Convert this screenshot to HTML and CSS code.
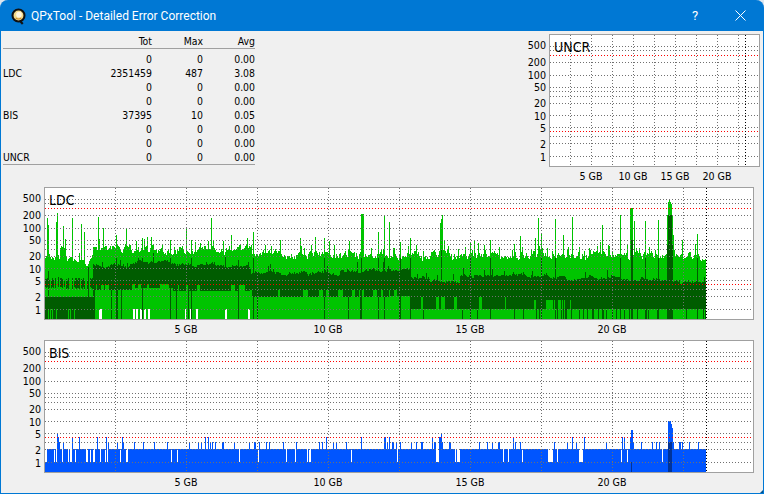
FILE: index.html
```html
<!DOCTYPE html>
<html lang="en">
<head>
<meta charset="utf-8">
<title>QPxTool - Detailed Error Correction</title>
<link rel="stylesheet" href="styles.css">
</head>
<body>
<div class="window">
  <header class="titlebar">
    <svg class="app-icon" viewBox="0 0 16 18" width="15" height="17" aria-hidden="true">
      <circle cx="8" cy="8" r="6.4" fill="#f3d98a" stroke="#111" stroke-width="2.2"/>
      <circle cx="8.5" cy="7" r="3" fill="#fff6df"/>
      <path d="M5 10.5c2 1.6 4 1.6 6 0" fill="none" stroke="#c98a2b" stroke-width="1.2"/>
      <path d="M9.5 13.5l3 3.5" stroke="#111" stroke-width="2.2" fill="none"/>
    </svg>
    <span class="title">QPxTool - Detailed Error Correction</span>
    <span class="help">?</span>
    <svg class="close" viewBox="0 0 11 11" width="11" height="11" aria-hidden="true">
      <path d="M.5.5l10 10M10.5.5l-10 10" stroke="#fff" stroke-width="1" fill="none"/>
    </svg>
  </header>
  <main class="content">
    <section class="top-row">
      <table class="stats">
        <thead>
          <tr><th class="name"></th><th>Tot</th><th>Max</th><th>Avg</th></tr>
        </thead>
        <tbody>
          <tr><td class="name"></td><td>0</td><td>0</td><td>0.00</td></tr>
          <tr><td class="name">LDC</td><td>2351459</td><td>487</td><td>3.08</td></tr>
          <tr><td class="name"></td><td>0</td><td>0</td><td>0.00</td></tr>
          <tr><td class="name"></td><td>0</td><td>0</td><td>0.00</td></tr>
          <tr><td class="name">BIS</td><td>37395</td><td>10</td><td>0.05</td></tr>
          <tr><td class="name"></td><td>0</td><td>0</td><td>0.00</td></tr>
          <tr><td class="name"></td><td>0</td><td>0</td><td>0.00</td></tr>
          <tr><td class="name">UNCR</td><td>0</td><td>0</td><td>0.00</td></tr>
        </tbody>
      </table>
      <svg id="uncr" class="chart chart-small" viewBox="522 34 238 148"></svg>
    </section>
    <svg id="ldc" class="chart chart-wide" viewBox="9 187 752 148"></svg>
    <svg id="bis" class="chart chart-wide" viewBox="9 340 752 148"></svg>
  </main>
  <div class="grip"></div>
</div>
<script src="script.js"></script>
</body>
</html>
```
FILE: styles.css
```css
* { box-sizing: border-box; }
html, body { margin: 0; padding: 0; }
body { width: 764px; height: 494px; overflow: hidden; background: #dde6ef; }
.window {
  position: relative;
  width: 764px;
  height: 494px;
  display: flex;
  flex-direction: column;
  background: #0078d4;
  border: 1px solid #0078d4;
  border-top: 0;
  border-radius: 8px 8px 0 0;
  overflow: hidden;
}
.titlebar {
  flex: none;
  height: 31px;
  display: flex;
  align-items: center;
  padding-left: 10px;
  color: #fff;
  font: 12px Roboto, "Open Sans", sans-serif;
}
.app-icon { flex: none; margin-top: 1px; }
.title { margin-left: 5px; flex: 1; }
.help { width: 12px; text-align: center; font-size: 13px; margin-right: 34px; }
.close { flex: none; margin-right: 17px; }
.content {
  flex: 1;
  background: #f0f0f0;
  display: flex;
  flex-direction: column;
  gap: 5px;
  padding-top: 3px;
  font-family: "DejaVu Sans Condensed", "DejaVu Sans", sans-serif;
}
.top-row {
  display: flex;
  justify-content: space-between;
  align-items: flex-start;
  padding: 0 3px 0 2px;
}
.stats {
  width: 252px;
  border-collapse: collapse;
  table-layout: fixed;
  font-size: 10.4px;
  color: #000;
  border-bottom: 1px solid #a0a0a0;
}
.stats th, .stats td {
  padding: 0;
  height: 14px;
  line-height: 14px;
  font-weight: normal;
  text-align: right;
  white-space: nowrap;
}
.stats .name { text-align: left; width: 40px; }
.stats th:nth-child(2) { width: 109px; }
.stats th:nth-child(3) { width: 51px; }
.stats thead th { border-bottom: 1px solid #a0a0a0; height: 14px; padding-bottom: 0; }
.stats tbody tr:first-child td { height: 17px; padding-top: 3px; }
.chart { display: block; flex: none; height: 148px; }
.chart-small { width: 238px; }
.chart-wide { width: 752px; margin-left: 8px; }
.plot { fill: #fff; stroke: #a0a0a0; stroke-width: 1; shape-rendering: crispEdges; }
.bars { fill: none; stroke-width: 1; shape-rendering: crispEdges; }
.bars-light { stroke: #00c400; }
.bars-dark { stroke: #005c00; }
.bars-blue { stroke: #0055ff; }
.bars-navy { stroke: #003399; }
.grid { fill: none; stroke-width: 1; shape-rendering: crispEdges; stroke: #707070; }
.grid-red { stroke: #ff0000; }
.grid-end { stroke: #000; }
.axis-label { font-size: 10.6px; fill: #000; font-family: "DejaVu Sans Condensed", "DejaVu Sans", sans-serif; }
.axis-y { text-anchor: end; }
.axis-x { text-anchor: middle; }
.chart-name { font-size: 14px; fill: #000; font-family: "DejaVu Sans Condensed", "DejaVu Sans", sans-serif; }
.grip {
  position: absolute;
  right: -1px;
  bottom: -1px;
  width: 0;
  height: 0;
  border-style: solid;
  border-width: 0 0 5px 5px;
  border-color: transparent transparent #00508e transparent;
}
```
FILE: script.js
```js
(function () {
  var NS = "http://www.w3.org/2000/svg";
  var LEVELS = { 500: 12, 400: 16, 300: 21, 200: 28, 100: 41, 50: 53, 40: 57, 30: 62, 20: 69, 10: 81, 5: 93, 4: 97, 3: 102, 2: 109, 1: 122 };
  var LABELS = [[500, 11], [200, 27.5], [100, 40.5], [50, 53], [20, 68.5], [10, 81.5], [5, 94], [2, 109.5], [1, 123]];

  function rng(seed) {
    return function () {
      seed |= 0; seed = seed + 0x6D2B79F5 | 0;
      var t = Math.imul(seed ^ seed >>> 15, 1 | seed);
      t = t + Math.imul(t ^ t >>> 7, 61 | t) ^ t;
      return ((t ^ t >>> 14) >>> 0) / 4294967296;
    };
  }
  function el(parent, name, attrs, text) {
    var n = document.createElementNS(NS, name);
    for (var k in attrs) n.setAttribute(k, attrs[k]);
    if (text !== undefined) n.textContent = text;
    parent.appendChild(n);
    return n;
  }
  function bar(x, y1, y2) { return "M" + (x + 0.5) + " " + y1 + "V" + y2; }
  function dotsH(x1, x2, y, period, len) {
    var d = "";
    for (var x = x1; x < x2; x += period) d += "M" + x + " " + (y + 0.5) + "h" + len;
    return d;
  }
  function dotsV(x, y1, y2, period, len) {
    var d = "";
    for (var y = y1; y < y2; y += period) d += "M" + (x + 0.5) + " " + y + "v" + len;
    return d;
  }

  function frame(svg, c) {
    el(svg, "rect", { class: "plot", x: c.x0 + 0.5, y: c.top + 0.5, width: c.x1 - c.x0, height: 132 });
  }
  function overlay(svg, c) {
    var gray = "", red = "", top = c.top, bottom = top + 132;
    Object.keys(LEVELS).forEach(function (v) {
      var y = top + LEVELS[v];
      if (v === "300" || v === "4") red += dotsH(c.x0 + 1, c.x1, y, 3, 1);
      else gray += dotsH(c.x0 + 1, c.x1, y, 3, 1);
    });
    for (var i = 0; i < c.vCount; i++) {
      gray += dotsV(c.vStart + i * c.vStep, top + 1, bottom, 3, 1);
    }
    el(svg, "path", { class: "grid", d: gray });
    el(svg, "path", { class: "grid grid-red", d: red });
    el(svg, "path", { class: "grid grid-end", d: dotsV(c.end, top + 1, bottom, 3, 1) });
    LABELS.forEach(function (l) {
      el(svg, "text", { class: "axis-label axis-y", x: c.x0 - 3, y: top + l[1] + 4 }, l[0]);
    });
    c.xLabels.forEach(function (l) {
      el(svg, "text", { class: "axis-label axis-x", x: l[0], y: bottom + 14 }, l[1]);
    });
    el(svg, "text", { class: "chart-name", x: c.x0 + 5, y: top + 18 }, c.name);
  }

  function drawLdc(svg) {
    var r = rng(71);
    var spikes = { 47: 218, 48: 225, 57: 213, 56: 222, 63: 226, 72: 218, 81: 224, 84: 232, 98: 217, 103: 228, 116: 235, 126: 229,
      142: 238, 170: 240, 186: 228, 191: 240, 211: 218, 231: 235, 253: 232, 265: 245, 315: 237, 324: 238, 361: 214, 362: 214, 363: 214, 378: 232, 384: 216, 389: 222,
      400: 242, 410: 238, 470: 243, 474: 240, 538: 218, 535: 238, 541: 233, 555: 219, 563: 235, 572: 217, 602: 225, 620: 215, 634: 221, 645: 221, 658: 220, 682: 240, 697: 234, 520: 236, 490: 240, 300: 238, 280: 240 };
    var light = "", dark = "", walk = 0, botRun = 0, bot = 297, topWalk = 0;
    var gaps = [99, 100, 101, 133, 134, 136, 137, 140, 141, 144, 145, 148, 149, 185, 190, 191, 196, 197, 225, 226, 248, 249];
    for (var x = 45; x <= 705; x++) {
      walk = walk * 0.6 + (r() - 0.5) * 7;
      topWalk = topWalk * 0.8 + (r() - 0.5) * 2.4;
      var base = x < 60 ? 256 : x < 66 ? 247 : x < 93 ? 260 : x < 130 ? 249 : x < 250 ? 250 : x < 700 ? 255 : 258;
      var t = Math.round(base + walk + (r() < 0.14 ? -12 * r() : 0));
      if (x >= 440 && x <= 441) t = 223 - (x - 440) * 4;
      if (x === 442) t = 215;
      if (x >= 630 && x <= 632) t = 208;
      if (x >= 668 && x <= 671) t = 200 + Math.abs(x - 669) * 2;
      if (x === 667 || x === 672) t = 215;
      if (x === 673) t = 235;
      if (spikes[x]) t = spikes[x];
      var floor = gaps.indexOf(x) >= 0 ? 309 : 319;
      light += bar(x, t, floor);

      if (x < 93) {
        if (r() < 0.7) dark += bar(x, 281 - Math.round(r() * 4), 287 + Math.round(r() * 2));
        if (r() < 0.05) dark += bar(x, 266 + Math.round(r() * 12), 297);
        dark += bar(x, 297, r() < 0.2 ? 309 : 319);
      } else {
        var dt, b1, b2;
        if (x < 130) { dt = 264; b1 = 285; b2 = 290; }
        else if (x < 170) { dt = 261; b1 = 284; b2 = 288; }
        else if (x < 250) { dt = 265; b1 = 285; b2 = 291; }
        else if (x < 340) { dt = 272; b1 = 290; b2 = 297; }
        else if (x < 390) { dt = 270; b1 = 290; b2 = 297; }
        else if (x < 410) { dt = 268; b1 = 290; b2 = 296; }
        else if (x < 430) { dt = 277; b1 = 297; b2 = 309; }
        else if (x < 460) { dt = 281; b1 = 297; b2 = 309; }
        else if (x < 530) { dt = 274; b1 = 297; b2 = 309; }
        else if (x < 575) { dt = 277; b1 = 300; b2 = 309; }
        else if (x < 620) { dt = 277; b1 = 309; b2 = 309; }
        else if (x < 680) { dt = 279; b1 = 309; b2 = 309; }
        else { dt = 281; b1 = 309; b2 = 309; }
        if (botRun <= 0) { bot = r() < 0.65 ? b2 : b1; botRun = 1 + Math.floor(r() * (bot === b2 ? 6 : 3)); }
        botRun--;
        var top = dt + Math.round(topWalk + r() * 2);
        if (r() < 0.05) top -= Math.round(3 + r() * 6);
        var end = bot;
        if (r() < (x > 530 ? 0.14 : 0.03)) end = 319;
        if (x === 631 || x === 632) { top = 240; end = 319; }
        if (x >= 668 && x <= 671) { top = 215; end = 319; }
        if (x === 667 || x === 672) { top = 245; end = 319; }
        if (x === 441) { top = 250; }
        if (spikes[x] && r() < 0.3) { top = Math.min(top, 258); end = 319; }
        dark += bar(x, Math.max(top, t), end);
      }
    }
    el(svg, "path", { class: "bars bars-light", d: light });
    el(svg, "path", { class: "bars bars-dark", d: dark });
  }

  function drawBis(svg) {
    var r = rng(29);
    var explicit = { 57: 433, 58: 437, 72: 437, 97: 437, 208: 437, 631: 430, 632: 430, 630: 437, 633: 442,
      668: 421, 669: 421, 670: 421, 671: 424, 672: 428, 622: 437, 572: 437, 441: 433, 440: 437, 439: 437, 385: 437, 389: 437, 326: 437 };
    var wide = [];
    [[436, 439], [457, 459], [548, 551], [579, 582]].forEach(function (g) {
      for (var i = g[0]; i <= g[1]; i++) wide.push(i);
    });
    var blue = "", navy = "";
    for (var x = 45; x <= 705; x++) {
      var t = 449;
      var slit = x < 130 ? 0.22 : 0.05;
      var roll = r();
      if (roll < slit || wide.indexOf(x) >= 0) t = 462;
      else if (roll > 0.89) t = 442;
      else if (roll > 0.88) t = 437;
      if (explicit[x]) t = explicit[x];
      blue += bar(x, t, 472);
    }
    navy += bar(631, 462, 472);
    for (var n = 668; n <= 671; n++) navy += bar(n, 442, 472);
    el(svg, "path", { class: "bars bars-blue", d: blue });
    el(svg, "path", { class: "bars bars-navy", d: navy });
  }

  var wideLabels = [[186, "5 GB"], [328, "10 GB"], [470, "15 GB"], [612, "20 GB"]];
  var wideBase = { x0: 44, x1: 753, vStart: 115, vStep: 71, vCount: 9, end: 706, xLabels: wideLabels };

  function build(id, name, top, base, draw) {
    var svg = document.getElementById(id);
    var c = Object.assign({}, base, { top: top, name: name });
    frame(svg, c);
    if (draw) draw(svg);
    overlay(svg, c);
  }
  build("uncr", "UNCR", 34, { x0: 549, x1: 759, vStart: 570, vStep: 21, vCount: 9, end: 745,
    xLabels: [[591, "5 GB"], [633, "10 GB"], [675, "15 GB"], [717, "20 GB"]] });
  build("ldc", "LDC", 187, wideBase, drawLdc);
  build("bis", "BIS", 340, wideBase, drawBis);
})();
```
